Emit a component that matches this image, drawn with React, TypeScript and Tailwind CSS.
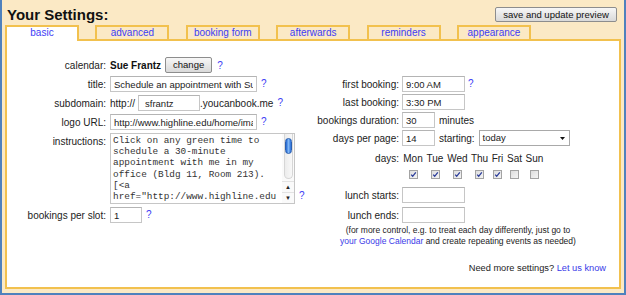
import type { ReactNode } from "react";

const tabs = ["basic", "advanced", "booking form", "afterwards", "reminders", "appearance"];

const days = [
  { d: "Mon", on: true },
  { d: "Tue", on: true },
  { d: "Wed", on: true },
  { d: "Thu", on: true },
  { d: "Fri", on: true },
  { d: "Sat", on: false },
  { d: "Sun", on: false },
];

const Help = () => <span className="shrink-0 text-[10px] leading-none text-[#3d3df5]">?</span>;

const Field = ({ w, value = "" }: { w: string; value?: string }) => (
  <input
    readOnly
    value={value}
    className={`h-[16px] shrink-0 border border-[#c6c6c6] border-t-[#b4b4b4] bg-white px-[3px] py-0 text-[9.5px] text-[#222] outline-none ${w}`}
  />
);

const LeftRow = ({ label, children, end }: { label: string; children: ReactNode; end?: boolean }) => (
  <div className={`flex gap-[4px] ${end ? "items-start" : "h-[16px] items-center"}`}>
    <div className={`w-[99px] shrink-0 text-right ${end ? "pt-[1px]" : ""}`}>{label}</div>
    {children}
  </div>
);

const RightRow = ({ label, children }: { label: string; children?: ReactNode }) => (
  <div className="flex h-[16px] items-center gap-[3px]">
    <div className="w-[99px] shrink-0 text-right">{label}</div>
    {children}
  </div>
);

const Check = ({ on }: { on: boolean }) => (
  <svg width="9" height="9" viewBox="0 0 9 9" className="mx-auto">
    <defs>
      <linearGradient id="cb" x1="0" y1="0" x2="1" y2="1">
        <stop offset="0" stopColor="#dcdcdc" />
        <stop offset="1" stopColor="#f6f6f6" />
      </linearGradient>
    </defs>
    <rect x="0.5" y="0.5" width="8" height="8" fill="url(#cb)" stroke="#a3a3a3" />
    {on && <path d="M2.2 4.6 L3.7 6.3 L6.8 2.3" fill="none" stroke="#2b3c9a" strokeWidth="1.3" />}
  </svg>
);

export default function App() {
  return (
    <div className="flex h-[295px] w-[626px] flex-col border-x-2 border-b-2 border-[#4f81bd] bg-[#fbe9c5] px-[3px] pb-[4px] font-['Liberation_Sans',Arial,sans-serif] text-[10px] text-[#222]">
      {/* header */}
      <div className="flex h-[25px] shrink-0 items-start justify-between">
        <h1 className="pl-[2px] pt-[7px] text-[15px] font-bold leading-[15px] text-[#111]">Your Settings:</h1>
        <button className="mr-[4px] mt-[7px] h-[15px] w-[122px] rounded-[2px] border border-[#8d8d8d] bg-gradient-to-b from-[#f7f7f7] to-[#d9d9d9] text-[9.5px] leading-[13px] text-[#111]">
          save and update preview
        </button>
      </div>

      {/* tabs */}
      <div className="flex h-[14px] shrink-0 items-start gap-[16.4px]">
        {tabs.map((t, i) => (
          <div
            key={t}
            className={`w-[74px] border-2 border-b-0 border-[#f2c14e] text-center leading-[12px] text-[#3d3df5] ${
              i === 0 ? "relative z-10 h-[16px] bg-white" : "h-[14px] bg-[#fbe9c5]"
            }`}
          >
            {t}
          </div>
        ))}
      </div>

      {/* panel */}
      <div className="flex flex-1 border-2 border-[#f2c14e] bg-white">
        {/* left column */}
        <div className="flex w-[293px] shrink-0 flex-col gap-[3px] pt-[16px]">
          <LeftRow label="calendar:">
            <span className="font-bold text-[#111]">Sue Frantz</span>
            <button className="h-[16px] w-[47px] shrink-0 rounded-[2px] border border-[#8d8d8d] bg-gradient-to-b from-[#f7f7f7] to-[#d9d9d9] text-[9.5px] leading-[14px] text-[#111]">
              change
            </button>
            <span className="ml-[1px]">
              <Help />
            </span>
          </LeftRow>
          <LeftRow label="title:">
            <Field w="w-[147px]" value="Schedule an appointment with Sue Frantz" />
            <Help />
          </LeftRow>
          <LeftRow label="subdomain:">
            <div className="flex items-center">
              <span className="mr-[3px]">http://</span>
              <Field w="w-[62px] pl-[6px]" value="sfrantz" />
              <span className="mr-[4px]">.youcanbook.me</span>
              <Help />
            </div>
          </LeftRow>
          <LeftRow label="logo URL:">
            <Field w="w-[147px]" value="http://www.highline.edu/home/images/logo.gif" />
            <Help />
          </LeftRow>
          <LeftRow label="instructions:" end>
            <div className="flex items-end gap-[4px]">
              <div className="flex h-[71px] w-[185px] shrink-0 border border-[#c6c6c6] bg-white">
                <div className="flex-1 overflow-hidden whitespace-pre pl-[2px] pt-[1px] font-['Liberation_Mono','Courier_New',monospace] text-[9.4px] leading-[11.2px] text-[#333]">
                  {'Click on any green time to\nschedule a 30-minute\nappointment with me in my\noffice (Bldg 11, Room 213).\n[<a\nhref="http://www.highline.edu'}
                </div>
                <div className="flex w-[12px] shrink-0 flex-col items-center bg-[#fafafa]">
                  <div className="flex h-[45px] w-[9px] flex-col items-center rounded-b-full border border-t-0 border-[#d6d6d6] bg-gradient-to-r from-[#ececec] to-[#f8f8f8]">
                    <div className="mt-[4px] h-[16px] w-[7px] rounded-full border border-[#2a5fb0] bg-gradient-to-r from-[#1e63d0] via-[#7fb6f5] to-[#2a6fd8]" />
                  </div>
                  <div className="mt-[2px] flex h-[11px] w-full items-center justify-center border-t border-[#e2e2e2] text-[6px] leading-none text-[#222]">
                    ▲
                  </div>
                  <div className="flex h-[11px] w-full items-center justify-center border-t border-[#e2e2e2] text-[6px] leading-none text-[#222]">
                    ▼
                  </div>
                </div>
              </div>
              <span className="pb-[1px]">
                <Help />
              </span>
            </div>
          </LeftRow>
          <LeftRow label="bookings per slot:">
            <Field w="w-[32px]" value="1" />
            <Help />
          </LeftRow>
        </div>

        {/* right column */}
        <div className="flex flex-1 flex-col pt-[35px]">
          <div className="flex flex-col gap-[2px]">
            <RightRow label="first booking:">
              <Field w="w-[63px]" value="9:00 AM" />
              <Help />
            </RightRow>
            <RightRow label="last booking:">
              <Field w="w-[63px]" value="3:30 PM" />
            </RightRow>
            <RightRow label="bookings duration:">
              <Field w="w-[33px]" value="30" />
              <span className="ml-[1px]">minutes</span>
            </RightRow>
            <RightRow label="days per page:">
              <Field w="w-[33px]" value="14" />
              <span className="ml-[1px]">starting:</span>
              <div className="ml-[1px] flex h-[16px] w-[91px] items-center justify-between border border-[#a9a9a9] bg-white pl-[3px] pr-[4px] text-[9.5px]">
                <span>today</span>
                <svg width="5" height="3" viewBox="0 0 5 3">
                  <path d="M0 0 H5 L2.5 3 Z" fill="#111" />
                </svg>
              </div>
            </RightRow>
          </div>

          <div className="mt-[5px] flex h-[14px] items-center gap-[3px]">
            <div className="w-[99px] shrink-0 text-right">days:</div>
            <div className="grid grid-cols-[22px_22px_23px_21px_15px_19px_21px]">
              {days.map((x) => (
                <div key={x.d} className="text-center">
                  {x.d}
                </div>
              ))}
            </div>
          </div>
          <div className="mt-[5px] flex h-[9px] gap-[3px]">
            <div className="w-[99px] shrink-0" />
            <div className="grid grid-cols-[22px_22px_23px_21px_15px_19px_21px]">
              {days.map((x) => (
                <Check key={x.d} on={x.on} />
              ))}
            </div>
          </div>

          <div className="mt-[8px] flex flex-col gap-[4px]">
            <RightRow label="lunch starts:">
              <Field w="w-[63px]" />
            </RightRow>
            <RightRow label="lunch ends:">
              <Field w="w-[63px]" />
            </RightRow>
          </div>

          <p className="mr-[3px] mt-[2px] text-center text-[8.5px] leading-[11px]">
            (for more control, e.g. to treat each day differently, just go to
            <br />
            <span className="text-[#3a3ae8]">your Google Calendar</span> and create repeating events as needed)
          </p>

          <p className="mt-[15px] pr-[13px] text-right text-[9.25px] leading-[12px]">
            Need more settings? <span className="text-[#3a3ae8]">Let us know</span>
          </p>
        </div>
      </div>
    </div>
  );
}
